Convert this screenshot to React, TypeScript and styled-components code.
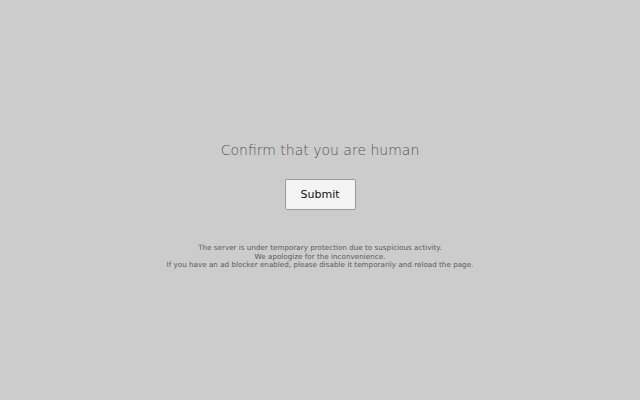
import React from "react";
import styled, { createGlobalStyle } from "styled-components";

const Global = createGlobalStyle`
  html, body { margin: 0; padding: 0; background: #cccccc; }
  body { font-family: "DejaVu Sans", sans-serif; }
`;

const Page = styled.div`
  width: 640px;
  height: 400px;
  display: flex;
  flex-direction: column;
  align-items: center;
  justify-content: flex-start;
  padding-top: 140px;
  box-sizing: border-box;
`;

const Title = styled.h1`
  margin: 0;
  font-family: "DejaVu Sans", sans-serif;
  font-size: 14px;
  font-weight: 200;
  line-height: 20px;
  color: #555555;
`;

const Button = styled.button`
  margin-top: 19px;
  width: 71px;
  height: 31px;
  font-family: "DejaVu Sans", sans-serif;
  font-size: 11px;
  color: #111;
  background: #f3f3f3;
  border: 1px solid #999;
  border-radius: 2px;
  padding: 0;
`;

const Note = styled.p`
  margin: 34px 0 0;
  text-align: center;
  font-family: "DejaVu Sans", sans-serif;
  font-size: 7.2px;
  line-height: 8.5px;
  color: #5a5a5a;
`;

export default function App() {
  return (
    <>
      <Global />
      <Page>
        <Title>Confirm that you are human</Title>
        <Button>Submit</Button>
        <Note>
          The server is under temporary protection due to suspicious activity.
          <br />
          We apologize for the inconvenience.
          <br />
          If you have an ad blocker enabled, please disable it temporarily and reload the page.
        </Note>
      </Page>
    </>
  );
}
